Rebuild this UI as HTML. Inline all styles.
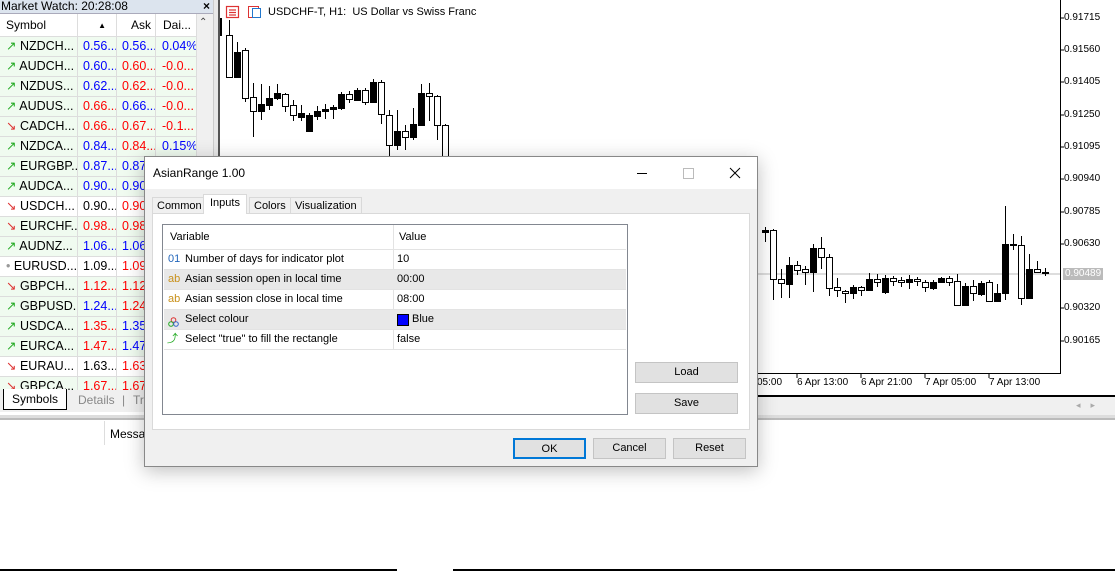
<!DOCTYPE html>
<html><head><meta charset="utf-8"><style>
*{margin:0;padding:0;box-sizing:border-box}
body{width:1115px;height:571px;position:relative;overflow:hidden;background:#fff;font-family:"Liberation Sans",sans-serif;font-size:12px;color:#000}
.abs{position:absolute}
.mw-title{left:0;top:0;width:216px;height:13px;background:#dce4ee;font-size:12px;line-height:12px;padding-left:1px}
.hdr{top:14px;height:23px;line-height:23px;border-right:1px solid #ddd;border-bottom:1px solid #ddd;background:#fff}
.row{left:0;width:197px;height:20px}
.cell{position:absolute;top:0;height:20px;line-height:19px;border-right:1px solid #ddd;border-bottom:1px solid #ddd;white-space:nowrap;overflow:hidden;font-size:12.5px}
.b{color:#0000ff}.r{color:#ff0000}.k{color:#000}
.tab{top:196px;height:18px;line-height:17px;border:1px solid #d9d9d9;border-bottom:none;background:#f0f0f0;padding:0 4px;font-size:11px}
.grow{left:164px;width:462px;height:20px;border-bottom:1px solid #e3e3e3;font-size:11px;line-height:19px}
.grow span{position:absolute}
.btn{height:21px;border:1px solid #c4c4c4;background:#e1e1e1;text-align:center;line-height:19px;font-size:11px}
.ax{left:1064px;font-size:10px;line-height:10px}
</style></head><body>

<div class="abs mw-title">Market Watch: 20:28:08</div>
<div class="abs" style="left:203px;top:0;font-size:12px;font-weight:bold;line-height:12px">×</div>
<div class="abs" style="left:0;top:13px;width:216px;height:1px;background:#aab"></div>
<div class="abs hdr" style="left:0;width:78px;padding-left:6px">Symbol</div>
<div class="abs hdr" style="left:78px;width:39px;text-align:right;padding-right:10px;font-size:8px">▲</div>
<div class="abs hdr" style="left:117px;width:39px;text-align:right;padding-right:4px">Ask</div>
<div class="abs hdr" style="left:156px;width:41px;padding-left:7px">Dai...</div>
<div class="abs" style="left:197px;top:14px;width:16px;height:376px;background:#f0f0f0"></div>
<div class="abs" style="left:199px;top:17px;font-size:10px;color:#444">⌃</div>
<div class="abs" style="left:213px;top:0;width:5px;height:400px;background:#e8e8e8;border-left:1px solid #ccc"></div>

<div id="rows"></div>

<div class="abs" style="left:0;top:390px;width:216px;height:22px;background:#f0f0f0"></div>
<div class="abs" style="left:3px;top:389px;width:64px;height:21px;border:1px solid #000;border-top:none;background:#fff;text-align:center;line-height:20px">Symbols</div>
<div class="abs" style="left:78px;top:393px;color:#888">Details</div>
<div class="abs" style="left:122px;top:393px;color:#888">|</div>
<div class="abs" style="left:133px;top:393px;color:#888">Tr</div>

<div class="abs" style="left:218px;top:0;width:2px;height:395px;background:#555"></div>
<div class="abs" style="left:220px;top:0;width:841px;height:374px;border-right:1px solid #000;border-bottom:1px solid #000"></div>
<svg class="abs" style="left:0;top:0" width="1115" height="400">
<g fill="none" stroke="#d33" stroke-width="1.2"><rect x="226.5" y="6.5" width="12" height="11"/><line x1="229" y1="10" x2="236" y2="10"/><line x1="229" y1="12.5" x2="236" y2="12.5"/><line x1="229" y1="15" x2="236" y2="15"/></g>
<rect x="248.5" y="6.5" width="10" height="11" fill="none" stroke="#d33"/><rect x="252.5" y="8.5" width="8" height="9" fill="#fff" stroke="#2277cc"/>
<line x1="221" y1="274" x2="1060" y2="274" stroke="#bbb"/>
<rect x="220.5" y="18.5" width="1" height="17" fill="#fff" stroke="#000"/>
<g id="cd" stroke="#000" stroke-width="1"></g>
<g stroke="#000"><line x1="1060" y1="18" x2="1064" y2="18"/><line x1="1060" y1="50" x2="1064" y2="50"/><line x1="1060" y1="82" x2="1064" y2="82"/><line x1="1060" y1="115" x2="1064" y2="115"/><line x1="1060" y1="147" x2="1064" y2="147"/><line x1="1060" y1="179" x2="1064" y2="179"/><line x1="1060" y1="212" x2="1064" y2="212"/><line x1="1060" y1="244" x2="1064" y2="244"/><line x1="1060" y1="308" x2="1064" y2="308"/><line x1="1060" y1="341" x2="1064" y2="341"/>
<line x1="797" y1="374" x2="797" y2="378"/><line x1="861" y1="374" x2="861" y2="378"/><line x1="925" y1="374" x2="925" y2="378"/><line x1="989" y1="374" x2="989" y2="378"/></g>
</svg>
<div class="abs" style="left:268px;top:6px;font-size:11px">USDCHF-T, H1:&nbsp; US Dollar vs Swiss Franc</div>
<div class="abs ax" style="top:13px">0.91715</div><div class="abs ax" style="top:45px">0.91560</div><div class="abs ax" style="top:77px">0.91405</div><div class="abs ax" style="top:110px">0.91250</div><div class="abs ax" style="top:142px">0.91095</div><div class="abs ax" style="top:174px">0.90940</div><div class="abs ax" style="top:207px">0.90785</div><div class="abs ax" style="top:239px">0.90630</div>
<div class="abs ax" style="top:268px;left:1063px;background:#bbb;color:#fff;padding:1px 2px">0.90489</div>
<div class="abs ax" style="top:303px">0.90320</div><div class="abs ax" style="top:336px">0.90165</div>
<div class="abs" style="top:377px;left:757px;font-size:10px">05:00</div>
<div class="abs" style="top:377px;left:797px;font-size:10px">6 Apr 13:00</div>
<div class="abs" style="top:377px;left:861px;font-size:10px">6 Apr 21:00</div>
<div class="abs" style="top:377px;left:925px;font-size:10px">7 Apr 05:00</div>
<div class="abs" style="top:377px;left:989px;font-size:10px">7 Apr 13:00</div>
<div class="abs" style="left:218px;top:395px;width:897px;height:2px;background:#000"></div>
<div class="abs" style="left:218px;top:397px;width:897px;height:19px;background:#f0f0f0"></div>
<div class="abs" style="left:1076px;top:400px;color:#aaa;font-size:9px">◂&nbsp;&nbsp;&nbsp;&nbsp;▸</div>
<div class="abs" style="left:0;top:415px;width:1115px;height:3px;background:#ddd"></div>
<div class="abs" style="left:0;top:418px;width:1115px;height:2px;background:#bbb"></div>
<div class="abs" style="left:104px;top:421px;width:1px;height:24px;background:#ddd"></div>
<div class="abs" style="left:110px;top:427px">Messa</div>
<div class="abs" style="left:0;top:569px;width:397px;height:2px;background:#000"></div>
<div class="abs" style="left:453px;top:569px;width:662px;height:2px;background:#000"></div>

<div class="abs" style="left:144px;top:156px;width:614px;height:311px;background:#f0f0f0;border:1px solid #888;box-shadow:0 4px 18px rgba(0,0,0,0.25)">
 <div class="abs" style="left:0;top:0;width:612px;height:32px;background:#fff"></div>
 <div class="abs" style="left:8px;top:9px;font-size:12px">AsianRange 1.00</div>
 <svg class="abs" style="left:480px;top:6px" width="130" height="20"><line x1="12" y1="10.5" x2="22" y2="10.5" stroke="#000"/><rect x="58.5" y="5.5" width="10" height="10" fill="none" stroke="#bbb"/><path d="M105 5 L115 15 M115 5 L105 15" stroke="#000" stroke-width="1"/></svg>
</div>
<div class="abs tab" style="left:152px;top:197px;height:17px">Common</div>
<div class="abs tab" style="left:203px;top:194px;height:20px;background:#fff;z-index:2;padding:0 6px">Inputs</div>
<div class="abs tab" style="left:249px;top:197px;height:17px">Colors</div>
<div class="abs tab" style="left:290px;top:197px;height:17px">Visualization</div>
<div class="abs" style="left:152px;top:213px;width:598px;height:217px;background:#fff;border:1px solid #d9d9d9"></div>
<div class="abs" style="left:162px;top:224px;width:466px;height:191px;border:1px solid #828790;background:#fff"></div>
<div class="abs" style="left:393px;top:225px;width:1px;height:124px;background:#e3e3e3"></div>
<div class="abs" style="left:170px;top:231px;font-size:11px">Variable</div>
<div class="abs" style="left:399px;top:231px;font-size:11px">Value</div>
<div class="abs" style="left:164px;top:249px;width:462px;height:1px;background:#e3e3e3"></div>
<div class="abs grow" style="top:250px"><span style="left:4px;color:#2266bb">01</span><span style="left:21px">Number of days for indicator plot</span><span style="left:233px">10</span></div>
<div class="abs grow" style="top:270px;background:#e8e8e8"><span style="left:4px;color:#c8901a">ab</span><span style="left:21px">Asian session open in local time</span><span style="left:233px">00:00</span></div>
<div class="abs grow" style="top:290px"><span style="left:4px;color:#c8901a">ab</span><span style="left:21px">Asian session close in local time</span><span style="left:233px">08:00</span></div>
<div class="abs grow" style="top:310px;background:#e8e8e8"><span style="left:4px;top:5px"><svg width="11" height="10"><circle cx="5.5" cy="3" r="2.3" fill="none" stroke="#d33"/><circle cx="3" cy="7" r="2.3" fill="none" stroke="#2a2"/><circle cx="8" cy="7" r="2.3" fill="none" stroke="#36c"/></svg></span><span style="left:21px">Select colour</span><span style="left:233px;top:4px;width:12px;height:12px;background:#0000ff;border:1px solid #000"></span><span style="left:248px">Blue</span></div>
<div class="abs grow" style="top:330px"><span style="left:3px;color:#2a2">⤴</span><span style="left:21px">Select "true" to fill the rectangle</span><span style="left:233px">false</span></div>
<div class="abs btn" style="left:635px;top:362px;width:103px">Load</div>
<div class="abs btn" style="left:635px;top:393px;width:103px">Save</div>
<div class="abs btn" style="left:513px;top:438px;width:73px;border:2px solid #0078d7">OK</div>
<div class="abs btn" style="left:593px;top:438px;width:73px">Cancel</div>
<div class="abs btn" style="left:673px;top:438px;width:73px">Reset</div>

<script>
var d=[["NZDCH...","0.56...","b","0.56...","b","0.04%","b",1],["AUDCH...","0.60...","b","0.60...","r","-0.0...","r",1],["NZDUS...","0.62...","b","0.62...","r","-0.0...","r",1],["AUDUS...","0.66...","r","0.66...","b","-0.0...","r",1],["CADCH...","0.66...","r","0.67...","r","-0.1...","r",0],["NZDCA...","0.84...","b","0.84...","r","0.15%","b",1],["EURGBP...","0.87...","b","0.87","b","","",1],["AUDCA...","0.90...","b","0.90","b","","",1],["USDCH...","0.90...","k","0.90","r","","",0],["EURCHF...","0.98...","r","0.98","r","","",0],["AUDNZ...","1.06...","b","1.06","b","","",1],["EURUSD...","1.09...","k","1.09","r","","",2],["GBPCH...","1.12...","r","1.12","r","","",0],["GBPUSD...","1.24...","b","1.24","r","","",1],["USDCA...","1.35...","r","1.35","b","","",1],["EURCA...","1.47...","r","1.47","b","","",1],["EURAU...","1.63...","k","1.63","r","","",0],["GBPCA...","1.67...","r","1.67","r","","",0]];
var h="";d.forEach(function(r,i){var bg=(i==8||i==11||i==16)?"#fff":"#f0fbf0";var ic=r[7]==1?'<span style="color:#2a2">↗</span>':r[7]==0?'<span style="color:#d33">↘</span>':'<span style="color:#999">•</span>';
h+='<div class="abs row" style="top:'+(37+i*20)+'px;background:'+bg+';height:'+(i==17?13:20)+'px;overflow:hidden"><div class="cell" style="left:0;width:78px;padding-left:6px">'+ic+' '+r[0]+'</div><div class="cell '+r[2]+'" style="left:78px;width:39px;padding-left:5px">'+r[1]+'</div><div class="cell '+r[4]+'" style="left:117px;width:39px;padding-left:5px">'+r[3]+'</div><div class="cell '+r[6]+'" style="left:156px;width:41px;padding-left:6px">'+r[5]+'</div></div>';});
document.getElementById("rows").innerHTML=h;
var c=[[229,35,77,20,78,0],[237,52,77,42,77,1],[245,50,98,48,102,0],[253,97,111,83,137,0],[261,104,111,84,120,1],[269,98,105,86,110,1],[277,93,98,84,100,1],[285,94,106,93,112,0],[293,105,115,100,121,0],[301,113,117,105,121,1],[309,115,131,113,131,1],[317,111,116,106,120,1],[325,109,111,104,119,1],[333,107,109,105,119,1],[341,94,108,92,110,1],[349,94,99,91,103,0],[357,90,100,88,101,1],[365,90,102,88,105,0],[373,82,102,79,103,1],[381,82,114,80,124,0],[389,115,145,110,160,0],[397,131,145,110,150,1],[405,131,137,125,150,0],[413,124,137,108,140,1],[421,93,125,84,125,1],[429,93,96,83,121,0],[437,96,125,95,140,0],[445,125,160,124,160,0],
[765,230,232,227,242,1],[773,230,279,229,300,0],[781,279,283,269,298,0],[789,265,284,257,298,1],[797,265,270,261,275,0],[805,269,272,266,285,0],[813,248,272,244,292,1],[821,248,257,237,269,0],[829,257,288,254,296,0],[837,287,290,278,297,0],[845,291,293,290,303,0],[853,287,293,285,299,1],[861,287,290,286,296,0],[869,279,290,273,290,1],[877,279,282,274,287,0],[885,278,292,275,294,1],[893,278,281,276,286,0],[901,280,282,277,287,0],[909,279,282,275,289,1],[917,279,281,277,286,0],[925,282,287,280,292,0],[933,282,288,280,290,1],[941,278,282,277,283,1],[949,278,282,276,286,0],[957,281,305,274,305,0],[965,286,305,283,305,1],[973,286,293,280,301,0],[981,283,294,281,296,1],[989,282,301,280,302,0],[997,293,301,284,301,1],[1005,244,293,206,300,1],[1013,244,245,234,250,0],[1021,245,298,236,305,0],[1029,269,298,254,299,1],[1037,269,272,261,273,0],[1045,272,273,268,276,0]];
var s="";c.forEach(function(k){s+='<line x1="'+(k[0]+.5)+'" y1="'+k[3]+'" x2="'+(k[0]+.5)+'" y2="'+k[4]+'"/><rect x="'+(k[0]-2.5)+'" y="'+(k[1]+.5)+'" width="6" height="'+Math.max(1,k[2]-k[1])+'" fill="'+(k[5]?"#000":"#fff")+'"/>';});
document.getElementById("cd").innerHTML=s;
</script>
</body></html>
